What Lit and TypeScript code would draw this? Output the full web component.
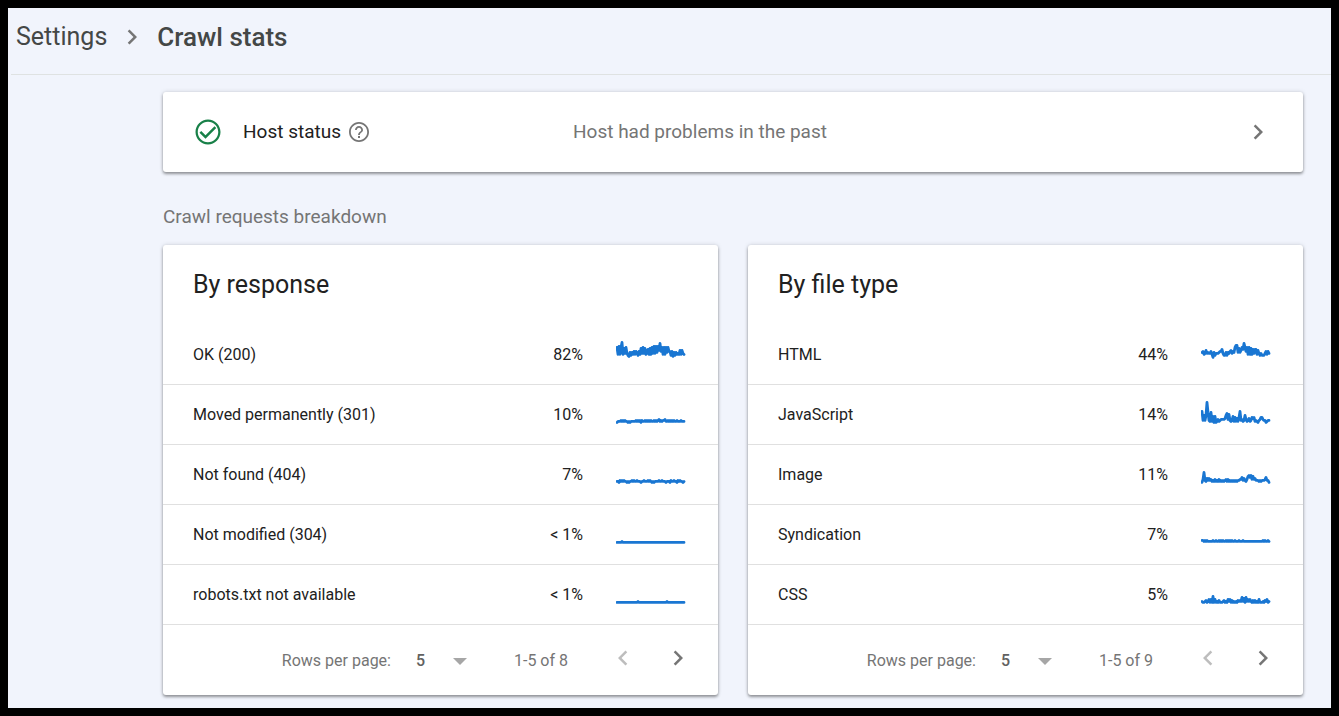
import { LitElement, html, css, svg } from "lit";
import { customElement, property } from "lit/decorators.js";

interface Row {
  label: string;
  share: string;
  trend: number[];
}

const RESPONSES: Row[] = [
  { label: "OK (200)", share: "82%", trend: [12, 19, 11, 19, 12, 7, 19, 13, 18, 12, 18, 20, 21, 17, 20, 17, 19, 16, 19, 16, 18, 20, 16, 19, 13, 18, 12, 18, 13, 19, 17, 14, 19, 13, 19, 12, 18, 11, 18, 11, 17, 11, 15, 8, 16, 12, 19, 12, 19, 12, 17, 12, 16, 16, 20, 16, 21, 17, 20, 17, 19, 18, 19, 15, 19, 15, 18, 19] },
  { label: "Moved permanently (301)", share: "10%", trend: [27, 26, 26, 26, 25, 26, 25, 26, 25, 26, 26, 27, 26, 27, 26, 26, 26, 26, 26, 25, 26, 25, 26, 25, 27, 25, 26, 26, 25, 26, 25, 26, 25, 26, 25, 26, 26, 25, 26, 25, 26, 25, 24, 26, 25, 26, 25, 25, 24, 26, 26, 25, 26, 25, 26, 25, 26, 25, 26, 26, 25, 26, 26, 26, 25, 26, 26, 26] },
  { label: "Not found (404)", share: "7%", trend: [26, 26, 27, 25, 26, 25, 26, 25, 26, 26, 27, 26, 27, 26, 26, 25, 26, 25, 26, 26, 25, 26, 26, 26, 27, 26, 26, 25, 26, 26, 26, 25, 26, 25, 26, 27, 26, 27, 26, 26, 26, 26, 25, 26, 26, 25, 26, 26, 26, 27, 26, 26, 26, 27, 25, 26, 26, 25, 26, 26, 27, 25, 26, 25, 26, 26, 27, 26] },
  { label: "Not modified (304)", share: "< 1%", trend: [27, 27, 27, 27, 27, 26, 27, 27, 27, 27, 27, 27, 27, 27, 27, 27, 27, 27, 27, 27, 27, 27, 27, 27, 27, 27, 27, 27, 27, 27, 27, 27, 27, 27, 27, 27, 27, 27, 27, 27, 27, 27, 27, 27, 27, 27, 27, 27, 27, 27, 27, 27, 27, 27, 27, 27, 27, 27, 27, 27, 27, 27, 27, 27, 27, 27, 27, 27] },
  { label: "robots.txt not available", share: "< 1%", trend: [27, 27, 27, 27, 27, 27, 27, 27, 27, 27, 27, 27, 27, 27, 27, 27, 27, 27, 27, 27, 27, 26, 27, 27, 27, 27, 27, 27, 27, 27, 27, 27, 27, 27, 27, 27, 27, 27, 27, 27, 27, 27, 27, 27, 27, 27, 27, 27, 27, 27, 26, 27, 27, 27, 27, 27, 27, 27, 27, 27, 27, 27, 27, 27, 27, 27, 27, 27] },
];

const FILE_TYPES: Row[] = [
  { label: "HTML", share: "44%", trend: [17, 16, 19, 18, 15, 18, 17, 18, 18, 16, 19, 22, 17, 20, 18, 18, 18, 17, 16, 16, 14, 18, 20, 20, 17, 20, 17, 18, 16, 15, 18, 16, 17, 12, 10, 10, 17, 13, 17, 15, 12, 14, 8, 12, 16, 12, 19, 12, 19, 13, 19, 14, 18, 14, 14, 19, 15, 18, 20, 18, 20, 20, 20, 18, 16, 19, 16, 18] },
  { label: "JavaScript", share: "14%", trend: [16, 25, 20, 25, 20, 7, 17, 25, 26, 17, 26, 21, 27, 21, 27, 26, 24, 26, 25, 24, 24, 24, 24, 23, 20, 18, 24, 19, 25, 26, 25, 21, 26, 22, 26, 23, 26, 22, 16, 25, 24, 26, 25, 20, 24, 26, 25, 23, 26, 25, 22, 23, 22, 26, 25, 26, 27, 25, 24, 22, 22, 24, 25, 25, 27, 26, 25, 25] },
  { label: "Image", share: "11%", trend: [27, 24, 17, 25, 26, 23, 25, 23, 25, 24, 26, 25, 26, 24, 26, 25, 26, 24, 26, 25, 26, 25, 26, 25, 24, 26, 24, 26, 25, 26, 25, 26, 25, 26, 25, 26, 25, 25, 24, 24, 22, 25, 23, 25, 26, 24, 21, 20, 22, 20, 24, 21, 24, 23, 25, 25, 25, 26, 25, 26, 25, 25, 25, 24, 22, 25, 25, 27] },
  { label: "Syndication", share: "7%", trend: [25, 25, 26, 25, 26, 25, 26, 26, 26, 26, 26, 25, 26, 26, 25, 26, 26, 25, 26, 25, 26, 25, 26, 26, 25, 26, 25, 26, 25, 26, 25, 26, 26, 25, 26, 26, 26, 25, 26, 26, 26, 25, 26, 26, 26, 26, 26, 26, 26, 26, 26, 26, 26, 26, 26, 26, 26, 26, 26, 26, 26, 25, 26, 25, 26, 26, 25, 26] },
  { label: "CSS", share: "5%", trend: [26, 27, 27, 26, 25, 27, 26, 24, 27, 24, 27, 21, 27, 24, 27, 26, 27, 25, 27, 27, 27, 26, 25, 27, 26, 27, 24, 26, 24, 27, 25, 27, 26, 27, 26, 27, 25, 26, 25, 26, 22, 26, 23, 27, 22, 26, 24, 26, 24, 26, 27, 25, 27, 25, 27, 26, 27, 24, 27, 27, 27, 26, 27, 25, 26, 24, 27, 26] },
];

const CHEVRON_RIGHT = "M10 6 8.59 7.41 13.17 12l-4.58 4.59L10 18l6-6z";
const CHEVRON_LEFT = "M15.41 7.41 14 6l-6 6 6 6 1.41-1.41L10.83 12z";

const icon = (path: string) => html`
  <svg class="icon" viewBox="0 0 24 24" aria-hidden="true">${svg`<path d=${path} />`}</svg>
`;

const iconStyles = css`
  .icon {
    display: block;
    width: 30px;
    height: 30px;
    fill: #757575;
  }
`;

const cardStyles = css`
  .card {
    background: #fff;
    border-radius: 3px;
    box-shadow: 0 2px 3px rgba(0, 0, 0, 0.36), 0 0 4px rgba(60, 64, 67, 0.2);
  }
`;

@customElement("trend-line")
export class TrendLine extends LitElement {
  @property({ attribute: false }) values: number[] = [];

  static styles = css`
    :host {
      display: block;
    }
    .plot {
      display: block;
      width: 70px;
      height: 40px;
    }
    .line {
      fill: none;
      stroke: #1976d2;
      stroke-width: 2.8;
      stroke-linejoin: round;
      stroke-linecap: round;
    }
  `;

  render() {
    const points = this.values.map((y, i) => `${i + 1},${y + 0.4}`).join(" ");
    return html`
      <svg class="plot" viewBox="0 0 70 40" aria-hidden="true">
        ${svg`<polyline class="line" points=${points} />`}
      </svg>
    `;
  }
}

@customElement("breakdown-card")
export class BreakdownCard extends LitElement {
  @property() heading = "";
  @property({ attribute: false }) rows: Row[] = [];
  @property({ type: Number }) total = 0;

  static styles = [
    iconStyles,
    cardStyles,
    css`
      :host {
        display: block;
      }
      .title {
        margin: 0;
        padding: 24px 30px;
        font-size: 25px;
        line-height: 32px;
        font-weight: 400;
        color: #212121;
      }
      .table {
        width: 100%;
        border-collapse: separate;
        border-spacing: 0;
        font-size: 16px;
        line-height: 20px;
        color: #212121;
      }
      .cell {
        box-sizing: border-box;
        height: 60px;
        padding: 0;
        border-bottom: 1px solid #e0e0e0;
        font-weight: 400;
      }
      .name {
        padding-left: 30px;
        text-align: left;
      }
      .share {
        text-align: right;
      }
      .trend {
        width: 135px;
        padding: 0 32px 0 33px;
      }
      .pager {
        display: flex;
        box-sizing: border-box;
        align-items: center;
        justify-content: flex-end;
        height: 70px;
        padding: 2px 25px 0 0;
        font-size: 16px;
        line-height: 20px;
        color: #757575;
      }
      .picker {
        display: grid;
        align-items: center;
        margin: 0 47px 0 25px;
      }
      .select {
        grid-area: 1 / 1;
        width: 51px;
        padding: 0;
        border: 0;
        background: none;
        appearance: none;
        font: 500 16px/20px Roboto, sans-serif;
        color: #616161;
      }
      .arrow {
        grid-area: 1 / 1;
        justify-self: end;
        width: 14px;
        height: 7px;
        fill: #a6a6a6;
        pointer-events: none;
      }
      .range {
        margin-right: 40px;
      }
      .buttons {
        display: flex;
        gap: 25px;
        padding-bottom: 6px;
      }
      .step {
        padding: 0;
        border: 0;
        background: none;
      }
      .step:disabled .icon {
        fill: #bdbdbd;
      }
    `,
  ];

  render() {
    return html`
      <section class="card">
        <h2 class="title" id="title">${this.heading}</h2>
        <table class="table" aria-labelledby="title">
          <tbody>
            ${this.rows.map(
              (row) => html`
                <tr>
                  <th class="cell name" scope="row">${row.label}</th>
                  <td class="cell share">${row.share}</td>
                  <td class="cell trend"><trend-line .values=${row.trend}></trend-line></td>
                </tr>
              `
            )}
          </tbody>
        </table>
        <div class="pager">
          <label for="size">Rows per page:</label>
          <span class="picker">
            <select class="select" id="size">
              <option>5</option>
              <option>10</option>
              <option>25</option>
            </select>
            <svg class="arrow" viewBox="0 0 14 7" aria-hidden="true"><path d="M0 0h14L7 7z" /></svg>
          </span>
          <span class="range">1-5 of ${this.total}</span>
          <div class="buttons">
            <button class="step" aria-label="Previous page" disabled>${icon(CHEVRON_LEFT)}</button>
            <button class="step" aria-label="Next page">${icon(CHEVRON_RIGHT)}</button>
          </div>
        </div>
      </section>
    `;
  }
}

@customElement("app-root")
export class AppRoot extends LitElement {
  static styles = [
    iconStyles,
    cardStyles,
    css`
      :host {
        display: block;
        box-sizing: border-box;
        min-height: 100vh;
        border: 8px solid #000;
        background: #f1f4fc;
        font-family: Roboto, sans-serif;
        color: #212121;
      }
      .header {
        margin-left: 3px;
        border-bottom: 1px solid #dfe2e2;
      }
      .crumbs {
        display: flex;
        align-items: center;
        gap: 10px;
        padding: 12px 5px 20px;
        font-family: "Google Sans", "Product Sans", Roboto, sans-serif;
        font-size: 25px;
        line-height: 34px;
        color: #444746;
      }
      .crumb {
        color: inherit;
        text-decoration: none;
      }
      .current {
        margin: 0;
        font-size: 26px;
        font-weight: 500;
      }
      .content {
        padding: 17px 28px 12px 155px;
      }
      .host {
        display: grid;
        grid-template-columns: 380px 1fr 30px;
        align-items: center;
        height: 80px;
        padding: 0 30px;
        font-size: 19px;
        line-height: 24px;
        color: #757575;
        text-decoration: none;
      }
      .status {
        display: flex;
        align-items: center;
        color: #212121;
      }
      .check {
        width: 30px;
        height: 30px;
        margin-right: 20px;
        fill: #188048;
      }
      .help {
        width: 24px;
        height: 24px;
        margin-left: 6px;
        fill: #757575;
      }
      .caption {
        margin: 33px 0 16px;
        font-size: 19px;
        line-height: 24px;
        font-weight: 400;
        color: #757575;
      }
      .cards {
        display: grid;
        grid-template-columns: 1fr 1fr;
        gap: 30px;
      }
    `,
  ];

  render() {
    return html`
      <header class="header">
        <nav class="crumbs" aria-label="Breadcrumb">
          <a class="crumb" href="#settings">Settings</a>
          ${icon(CHEVRON_RIGHT)}
          <h1 class="current">Crawl stats</h1>
        </nav>
      </header>
      <main class="content">
        <a class="card host" href="#host-status">
          <span class="status">
            <svg class="check" viewBox="0 0 24 24" aria-hidden="true">
              <path d="M12 2C6.480 2 2 6.480 2 12s4.480 10 10 10 10-4.480 10-10S17.520 2 12 2zm0 18.200c-4.500 0-8.200-3.700-8.200-8.200S7.500 3.800 12 3.800s8.200 3.700 8.200 8.200-3.700 8.200-8.200 8.200zm5.200-12.800L10 14.600l-3.400-3.400-1.400 1.400L10 17.400l8.600-8.600z" />
            </svg>
            Host status
            <svg class="help" viewBox="0 0 24 24" aria-hidden="true">
              <path d="M11 18h2v-2h-2v2zm1-16C6.480 2 2 6.480 2 12s4.480 10 10 10 10-4.480 10-10S17.520 2 12 2zm0 18.200c-4.520 0-8.200-3.680-8.200-8.200S7.480 3.800 12 3.800s8.200 3.680 8.200 8.200-3.680 8.200-8.200 8.200zM12 6c-2.210 0-4 1.790-4 4h1.800c0-1.210.990-2.200 2.200-2.200s2.200.990 2.200 2.200c0 2-3.100 1.750-3.100 5h1.800c0-2.250 3.100-2.500 3.100-5 0-2.210-1.790-4-4-4z" />
            </svg>
          </span>
          <span>Host had problems in the past</span>
          ${icon(CHEVRON_RIGHT)}
        </a>
        <h2 class="caption">Crawl requests breakdown</h2>
        <div class="cards">
          <breakdown-card heading="By response" .rows=${RESPONSES} .total=${8}></breakdown-card>
          <breakdown-card heading="By file type" .rows=${FILE_TYPES} .total=${9}></breakdown-card>
        </div>
      </main>
    `;
  }
}
